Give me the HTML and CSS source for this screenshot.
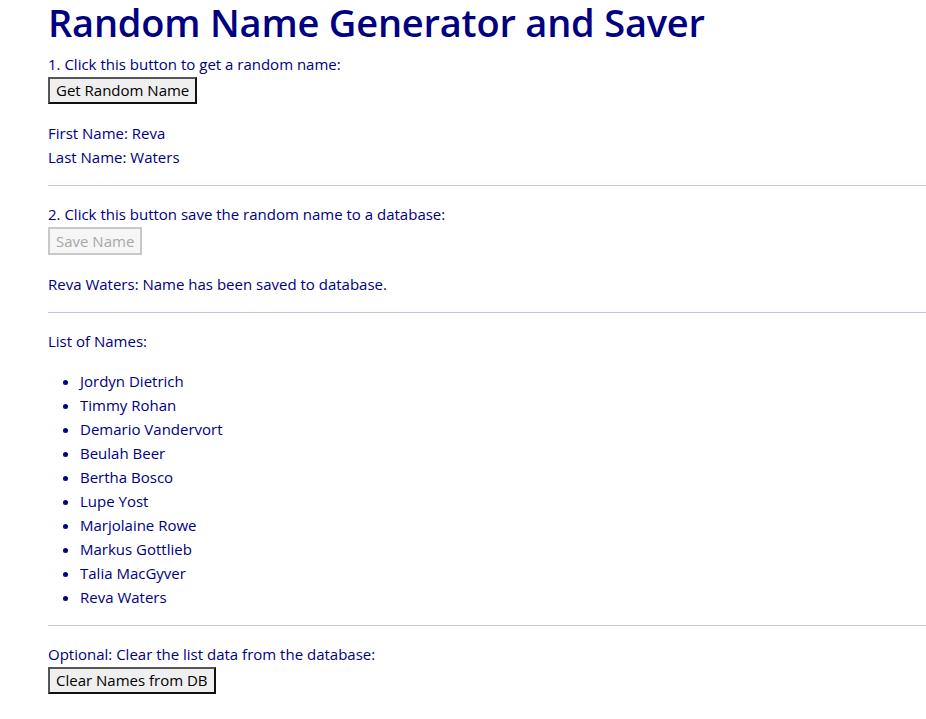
FILE: index.html
```html
<!DOCTYPE html>
<html>
<head>
<meta charset="utf-8">
<title>Random Name Generator and Saver</title>
<link rel="stylesheet" href="styles.css">
</head>
<body>
<div class="page">
  <h1 class="title">Random Name Generator and Saver</h1>
  <section class="step">
    <div class="label">1. Click this button to get a random name:</div>
    <div><button class="btn">Get Random Name</button></div>
  </section>
  <section class="info">
    <div class="line">First Name: Reva</div>
    <div class="line">Last Name: Waters</div>
  </section>
  <hr class="rule">
  <section class="step">
    <div class="label">2. Click this button save the random name to a database:</div>
    <div><button class="btn btn-disabled" disabled>Save Name</button></div>
  </section>
  <section class="info">
    <div class="line">Reva Waters: Name has been saved to database.</div>
  </section>
  <hr class="rule">
  <section class="info">
    <div class="line">List of Names:</div>
  </section>
  <ul class="names">
    <li>Jordyn Dietrich</li>
    <li>Timmy Rohan</li>
    <li>Demario Vandervort</li>
    <li>Beulah Beer</li>
    <li>Bertha Bosco</li>
    <li>Lupe Yost</li>
    <li>Marjolaine Rowe</li>
    <li>Markus Gottlieb</li>
    <li>Talia MacGyver</li>
    <li>Reva Waters</li>
  </ul>
  <hr class="rule">
  <section class="step step-last">
    <div class="label">Optional: Clear the list data from the database:</div>
    <div><button class="btn">Clear Names from DB</button></div>
  </section>
</div>
</body>
</html>
```
FILE: styles.css
```css
html, body {
  margin: 0;
  padding: 0;
  background: #ffffff;
}
body {
  font-family: "Open Sans", "Noto Sans", sans-serif;
  font-size: 15px;
  line-height: 24px;
  color: #000080;
}
.page {
  padding-left: 48px;
  display: flex;
  flex-direction: column;
}
.title {
  margin: 0 0 8px 0;
  font-size: 38px;
  line-height: 44px;
  font-weight: 600;
  color: #000080;
  letter-spacing: -0.2px;
}
.label {
  line-height: 24px;
}
.btn {
  font-family: "Open Sans", "Noto Sans", sans-serif;
  font-size: 15px;
  line-height: 19px;
  color: #000;
  background: #efefef;
  border: 2px solid;
  border-color: #555 #111 #111 #555;
  padding: 2px 6px 2px 6px;
  margin: 1px 0 0 0;
  height: 27px;
  border-radius: 0;
}
.btn-disabled {
  color: #a8a8a8;
  background: #f6f6f6;
  border-color: #c8c8c8;
  height: 28px;
}
.info {
  margin-top: 17px;
}
.rule {
  border: 0;
  border-top: 1px solid #c4c0e0;
  margin: 16px 0 0 0;
  height: 0;
}
.rule + .step, .rule + .info {
  margin-top: 16px;
}
.names {
  margin: 16px 0 0 0;
  padding-left: 32px;
  list-style: disc;
}
.names li {
  line-height: 24px;
}
```
